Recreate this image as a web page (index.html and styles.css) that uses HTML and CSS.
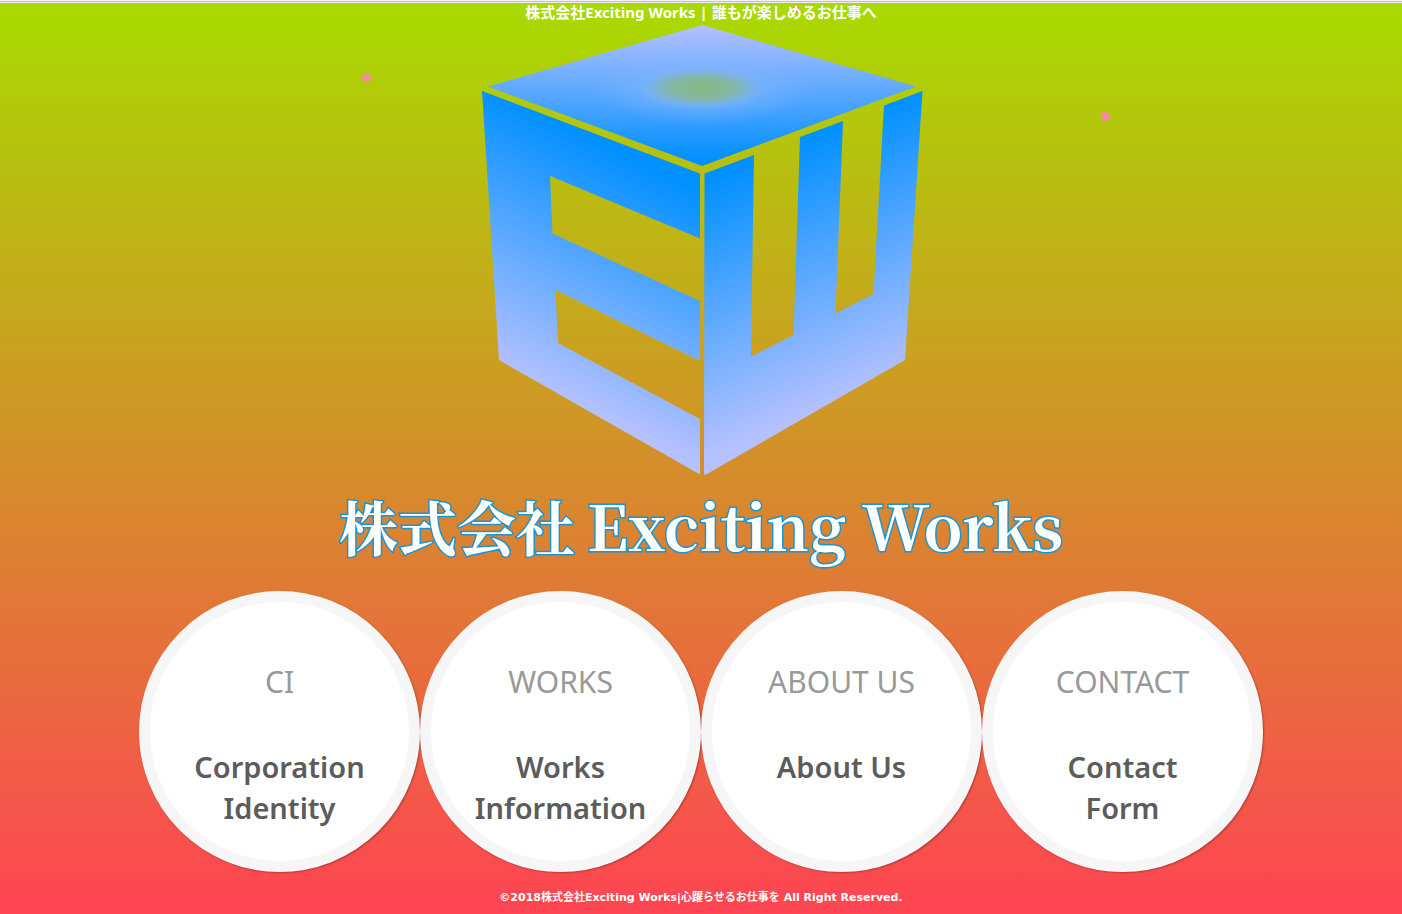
FILE: index.html
```html
<!DOCTYPE html>
<html lang="ja">
<head>
<meta charset="utf-8">
<meta name="viewport" content="width=device-width, initial-scale=1">
<title>株式会社Exciting Works | 誰もが楽しめるお仕事へ</title>
<link rel="stylesheet" href="styles.css">
</head>
<body>
<div class="particles" aria-hidden="true">
  <span class="particle particle-left"></span>
  <span class="particle particle-right"></span>
  <span class="particle particle-top"></span>
</div>
<header class="site-header">
  <h1 class="site-title">株式会社Exciting Works | 誰もが楽しめるお仕事へ</h1>
</header>
<main class="main">
  <svg class="cube" viewBox="479 23 444 452" role="img" aria-label="EW">
    <defs>
      <linearGradient id="face-top" gradientUnits="userSpaceOnUse" x1="702" y1="25" x2="702" y2="160">
        <stop offset="0" stop-color="#b4c0ff"/>
        <stop offset="1" stop-color="#0090ff"/>
      </linearGradient>
      <linearGradient id="face-left" gradientUnits="userSpaceOnUse" x1="602" y1="142" x2="493" y2="365">
        <stop offset="0" stop-color="#0090ff"/>
        <stop offset="1" stop-color="#b6c1ff"/>
      </linearGradient>
      <linearGradient id="face-right" gradientUnits="userSpaceOnUse" x1="804" y1="138" x2="904" y2="376">
        <stop offset="0" stop-color="#0090ff"/>
        <stop offset="1" stop-color="#b6c1ff"/>
      </linearGradient>
      <radialGradient id="glow">
        <stop offset="0" stop-color="#80b6ff" stop-opacity=".9"/>
        <stop offset=".5" stop-color="#80b6ff" stop-opacity=".5"/>
        <stop offset="1" stop-color="#80b6ff" stop-opacity="0"/>
      </radialGradient>
      <radialGradient id="core">
        <stop offset="0" stop-color="#88b880"/>
        <stop offset=".5" stop-color="#85b79a" stop-opacity=".9"/>
        <stop offset="1" stop-color="#80b6e8" stop-opacity="0"/>
      </radialGradient>
    </defs>
    <path fill="url(#face-top)" d="M488 86.500L702 25L916 86.500L702 166Z"/>
    <ellipse cx="702" cy="88" rx="112" ry="37" fill="url(#glow)"/>
    <ellipse cx="702" cy="88" rx="66" ry="22" fill="url(#core)"/>
    <path fill="url(#face-left)" d="M482 91L700 173.500V238.500L550 176L552.500 233.500L700 301V361L555.500 290L558 343L700 419V474.500L499 360Z"/>
    <path fill="url(#face-right)" d="M704.500 173.500L754 155L751 356.500L793.500 335L800 137L843 121L835.500 313.500L873.500 294L884 105.500L922.500 91L905 360L706 474.500H704Z"/>
  </svg>
  <p class="brand"><span class="brand-ja">株式会社</span><span class="brand-en">Exciting Works</span></p>
  <nav class="menu">
    <a class="menu-item" href="#ci"><span class="menu-label">CI</span><strong class="menu-text">Corporation Identity</strong></a>
    <a class="menu-item" href="#works"><span class="menu-label">WORKS</span><strong class="menu-text">Works Information</strong></a>
    <a class="menu-item" href="#about"><span class="menu-label">ABOUT US</span><strong class="menu-text">About Us</strong></a>
    <a class="menu-item" href="#contact"><span class="menu-label">CONTACT</span><strong class="menu-text">Contact<br>Form</strong></a>
  </nav>
</main>
<footer class="site-footer">©2018株式会社Exciting Works|心躍らせるお仕事を All Right Reserved.</footer>
</body>
</html>
```

FILE: styles.css
```css
* {
  box-sizing: border-box;
}

body {
  position: relative;
  margin: 0;
  min-height: 100vh;
  border-top: 1px solid #f4f2f4;
  background: linear-gradient(#a8db00, #ff4453);
  font-family: "DejaVu Sans", "Noto Sans CJK JP", sans-serif;
  color: #fff;
}

.site-header {
  position: relative;
  border-top: 1px solid #c6c2c6;
  box-shadow: inset 0 1px #efeaf4;
}

.site-title {
  margin: 0;
  padding-bottom: 1px;
  font-family: "Noto Sans", "Noto Sans CJK JP", sans-serif;
  font-size: 15px;
  line-height: 20px;
  font-weight: 700;
  text-align: center;
}

.particle {
  position: absolute;
  width: 9px;
  height: 9px;
  border-radius: 50%;
  background: #f48c9c;
}

.particle-left {
  left: 25.8%;
  top: 72px;
}

.particle-right {
  left: 78.5%;
  top: 111px;
}

.particle-top {
  left: 56.5%;
  top: 4px;
  opacity: .5;
}

.main {
  display: flex;
  flex-direction: column;
  align-items: center;
}

.cube {
  display: block;
  width: 444px;
  max-width: 90%;
  height: auto;
}

.brand {
  display: flex;
  flex-wrap: wrap;
  justify-content: center;
  align-items: baseline;
  gap: 0 12px;
  margin: 10px 0 25px;
  line-height: 80px;
  font-weight: 700;
  -webkit-text-stroke: 3px #1b94d2;
  paint-order: stroke fill;
}

.brand-ja {
  font-family: "Noto Serif CJK JP", "Noto Sans CJK JP", serif;
  font-size: 59px;
}

.brand-en {
  font-family: "Noto Serif CJK JP", "Liberation Serif", serif;
  font-size: 62px;
}

.menu {
  display: grid;
  grid-template-columns: repeat(auto-fit, minmax(260px, 1fr));
  width: 100%;
  max-width: 1124px;
}

.menu-item {
  display: flex;
  flex-direction: column;
  align-items: center;
  aspect-ratio: 1;
  padding: 60px 30px 0;
  border: 11px solid #f6f6f6;
  border-radius: 50%;
  background: #fff;
  box-shadow: 1px 1px 2px rgba(0, 0, 0, .3);
  font-family: "Noto Sans", sans-serif;
  text-align: center;
  text-decoration: none;
}

.menu-label {
  margin-bottom: 44px;
  font-family: "Comic Sans MS", "Noto Sans", sans-serif;
  font-size: 30px;
  line-height: 40px;
  color: #999;
}

.menu-text {
  font-size: 29px;
  line-height: 41px;
  font-weight: 600;
  color: #5c5c5c;
}

.site-footer {
  padding: 16px 0 6px;
  font-size: 11px;
  line-height: 20px;
  font-weight: 700;
  text-align: center;
}
```
